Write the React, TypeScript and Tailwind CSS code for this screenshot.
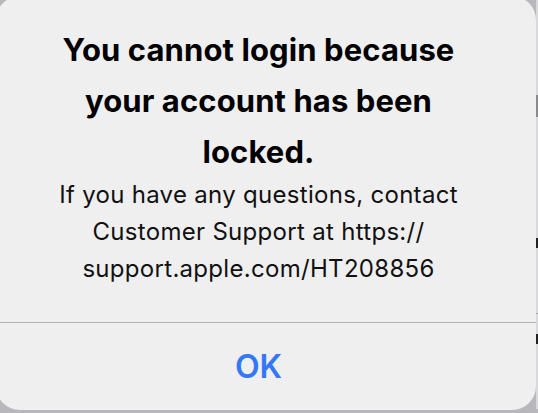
import React from "react";

export default function App() {
  return (
    <div
      className="w-[538px] h-[413px] overflow-hidden bg-[#b8b8bc] flex"
      style={{ fontFamily: "Inter, 'Noto Sans', sans-serif" }}
    >
      <div className="shrink-0 ml-[-4px] mt-[-4px] w-[540px] h-[414px] rounded-[24px] bg-[#efeff0] flex flex-col">
        <div className="flex-1 flex flex-col items-center pt-[28px] pr-[15px]">
          <div className="text-center text-[31px] leading-[51px] font-bold text-black tracking-[0.1px]">
            You cannot login because
            <br />
            your account has been
            <br />
            locked.
          </div>
          <div className="mt-[-1px] text-center text-[24px] leading-[37px] font-normal text-[#111] tracking-[0.3px]">
            If you have any questions, contact
            <br />
            Customer Support at https://
            <br />
            support.apple.com/HT208856
          </div>
        </div>
        <div className="h-px bg-[#b3b3b5]" />
        <div className="h-[87px] flex items-center justify-center pr-[15px]">
          <span className="text-[32px] font-semibold text-[#3478f6]">OK</span>
        </div>
      </div>
      <div className="shrink-0 w-[2px] h-[409px] bg-[#d9d9db] flex flex-col">
        <div className="mt-[95px] h-[22px] bg-[#8a8a8e]" />
        <div className="mt-[121px] h-[10px] bg-[#222]" />
        <div className="mt-[65px] h-px bg-[#a5a5a8]" />
        <div className="mt-[20px] h-[10px] bg-[#222]" />
      </div>
    </div>
  );
}
